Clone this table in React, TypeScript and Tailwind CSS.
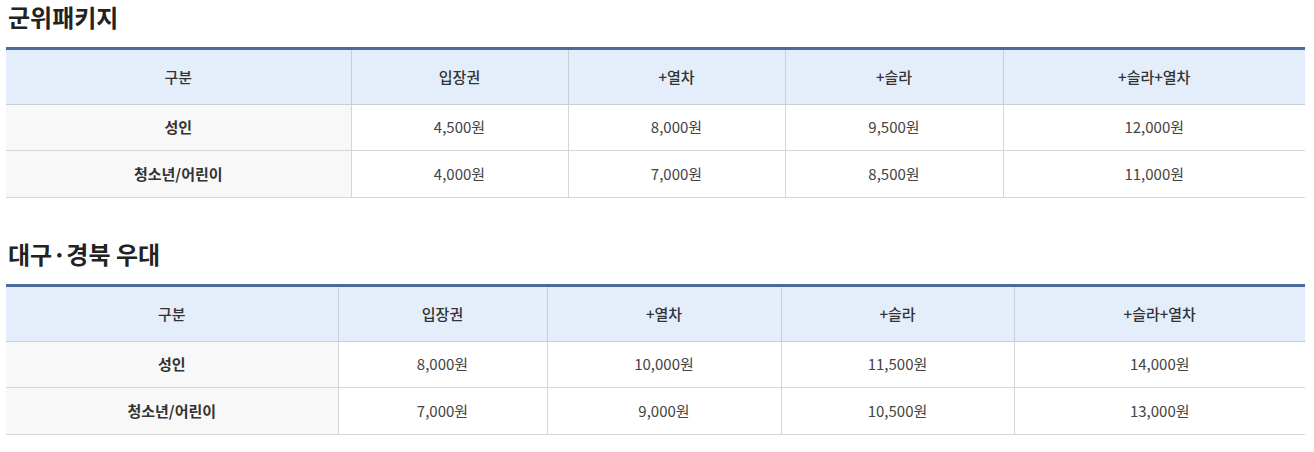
import React from 'react';

type Section = {
  title: string;
  widths: string[];
  rows: { label: string; prices: string[] }[];
};

const headers = ['구분', '입장권', '+열차', '+슬라', '+슬라+열차'];

const sections: Section[] = [
  {
    title: '군위패키지',
    widths: ['w-[345px]', 'w-[217px]', 'w-[217px]', 'w-[218px]', 'w-[302px]'],
    rows: [
      { label: '성인', prices: ['4,500원', '8,000원', '9,500원', '12,000원'] },
      { label: '청소년/어린이', prices: ['4,000원', '7,000원', '8,500원', '11,000원'] },
    ],
  },
  {
    title: '대구·경북 우대',
    widths: ['w-[332px]', 'w-[209px]', 'w-[234px]', 'w-[233px]', 'w-[291px]'],
    rows: [
      { label: '성인', prices: ['8,000원', '10,000원', '11,500원', '14,000원'] },
      { label: '청소년/어린이', prices: ['7,000원', '9,000원', '10,500원', '13,000원'] },
    ],
  },
];

const PriceTable = ({ section }: { section: Section }) => (
  <table className="w-full table-fixed border-collapse border-t-[3px] border-t-[#4d6b99] text-[15px]">
    <colgroup>
      {section.widths.map((w, i) => (
        <col key={i} className={w} />
      ))}
    </colgroup>
    <thead>
      <tr className="h-[56px] bg-[#e3eefa]">
        {headers.map((h, i) => (
          <th
            key={h}
            className={`font-medium text-[#333] border-b border-[#c9ced6] ${i > 0 ? 'border-l' : ''}`}
          >
            {h}
          </th>
        ))}
      </tr>
    </thead>
    <tbody>
      {section.rows.map((row, r) => (
        <tr key={row.label} className={r === 0 ? 'h-[46px]' : 'h-[47px]'}>
          <td className="bg-[#f8f8f8] text-center font-semibold text-[#333] border-b border-[#d6d6d6]">
            {row.label}
          </td>
          {row.prices.map((p, i) => (
            <td key={i} className="text-center text-[#444] border-b border-l border-[#d6d6d6]">
              {p}
            </td>
          ))}
        </tr>
      ))}
    </tbody>
  </table>
);

export default function App() {
  return (
    <div
      className="bg-white px-[6px] w-[1311px]"
      style={{ fontFamily: '"Noto Sans CJK KR", "Noto Sans", sans-serif' }}
    >
      {sections.map((section, idx) => (
        <section key={section.title} className={idx > 0 ? 'mt-[39px]' : ''}>
          <h2 className="pl-[2px] text-[24px] leading-[33px] font-bold text-[#222] mb-[14px]">
            {section.title}
          </h2>
          <PriceTable section={section} />
        </section>
      ))}
    </div>
  );
}
